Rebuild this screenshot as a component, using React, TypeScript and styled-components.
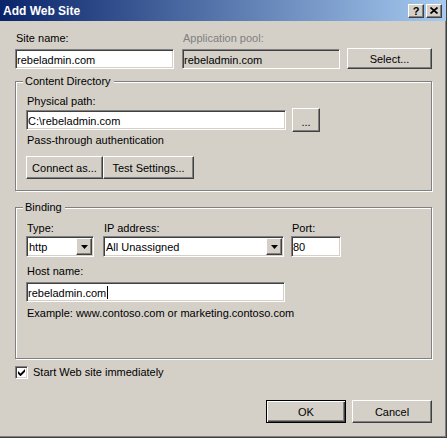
import React from 'react';
import styled, { createGlobalStyle, css } from 'styled-components';

const GlobalStyle = createGlobalStyle`
  html, body { margin: 0; padding: 0; background: #d4d0c8; }
  body {
    font-family: "Liberation Sans", Arial, sans-serif;
    font-size: 11px;
    color: #000;
  }
  * { box-sizing: border-box; }
`;

const raised = css`
  background: #d4d0c8;
  border-top: 1px solid #fff;
  border-left: 1px solid #fff;
  border-right: 1px solid #404040;
  border-bottom: 1px solid #404040;
  box-shadow: inset -1px -1px 0 #808080;
`;

const sunken = css`
  border-top: 1px solid #808080;
  border-left: 1px solid #808080;
  border-right: 1px solid #fff;
  border-bottom: 1px solid #fff;
  box-shadow: inset 1px 1px 0 #404040, inset -1px -1px 0 #d4d0c8;
`;

const Window = styled.div`
  width: 447px;
  height: 438px;
  background: #d4d0c8;
  border-right: 1px solid #404040;
  border-bottom: 1px solid #404040;
  box-shadow: inset -1px -1px 0 #808080;
  display: flex;
  flex-direction: column;
`;

const TitleBar = styled.div`
  height: 21px;
  flex: none;
  display: flex;
  align-items: center;
  padding: 0 4px 0 3px;
  background: linear-gradient(to right, #0a246a, #a6caf0);
  color: #fff;
  font-weight: bold;
  font-size: 12px;
`;

const TitleText = styled.div`
  flex: 1;
  white-space: nowrap;
`;

const CaptionButton = styled.div<{ $gap?: number }>`
  ${raised};
  width: 16px;
  height: 14px;
  margin-left: ${(p) => p.$gap ?? 0}px;
  display: flex;
  align-items: center;
  justify-content: center;
  color: #000;
  font-weight: bold;
  font-size: 11px;
  line-height: 12px;
`;

const Body = styled.div`
  padding: 11px 14px 0 15px;
  display: flex;
  flex-direction: column;
`;

const Row = styled.div<{ $align?: string; $mt?: number; $justify?: string; $gap?: number }>`
  display: flex;
  align-items: ${(p) => p.$align ?? 'flex-start'};
  justify-content: ${(p) => p.$justify ?? 'flex-start'};
  margin-top: ${(p) => p.$mt ?? 0}px;
  gap: ${(p) => p.$gap ?? 0}px;
`;

const Field = styled.div<{ $w: number; $ml?: number }>`
  display: flex;
  flex-direction: column;
  width: ${(p) => p.$w}px;
  margin-left: ${(p) => p.$ml ?? 0}px;
`;

const Label = styled.div<{ $disabled?: boolean; $mt?: number; $mb?: number }>`
  height: 13px;
  line-height: 13px;
  padding-left: 1px;
  white-space: nowrap;
  color: ${(p) => (p.$disabled ? '#808080' : '#000')};
  margin-top: ${(p) => p.$mt ?? 0}px;
  margin-bottom: ${(p) => p.$mb ?? 0}px;
`;

const TextBox = styled.div<{ $w?: number; $h?: number; $disabled?: boolean }>`
  ${sunken};
  width: ${(p) => (p.$w ? `${p.$w}px` : '100%')};
  height: ${(p) => p.$h ?? 20}px;
  background: ${(p) => (p.$disabled ? '#d4d0c8' : '#fff')};
  padding-left: 1px;
  padding-top: 1px;
  display: flex;
  align-items: center;
  white-space: nowrap;
  overflow: hidden;
`;

const Caret = styled.span`
  display: inline-block;
  width: 1px;
  height: 13px;
  background: #000;
  margin-left: 1px;
`;

const Button = styled.div<{ $w: number; $h?: number; $default?: boolean; $ml?: string }>`
  ${raised};
  width: ${(p) => p.$w}px;
  height: ${(p) => p.$h ?? 23}px;
  margin-left: ${(p) => p.$ml ?? '0'};
  display: flex;
  align-items: center;
  justify-content: center;
  white-space: nowrap;
  flex: none;
  ${(p) =>
    p.$default &&
    css`
      border: 1px solid #000;
      box-shadow: inset 1px 1px 0 #fff, inset -1px -1px 0 #404040, inset -2px -2px 0 #808080;
    `}
`;

const EllipsisButton = styled(Button)`
  margin-top: -2px;
  margin-bottom: -2px;
  padding-top: 3px;
`;

const Group = styled.div<{ $mt: number; $pt: number; $pb: number }>`
  position: relative;
  margin-top: ${(p) => p.$mt}px;
  border: 1px solid #808080;
  box-shadow: inset 1px 1px 0 #fff, 1px 1px 0 #fff;
  padding: ${(p) => p.$pt}px 0 ${(p) => p.$pb}px 10px;
  display: flex;
  flex-direction: column;
`;

const GroupTitle = styled.div`
  position: absolute;
  top: -7px;
  left: 7px;
  height: 13px;
  line-height: 13px;
  padding: 0 3px 0 2px;
  background: #d4d0c8;
  white-space: nowrap;
`;

const Combo = styled.div<{ $w: number }>`
  ${sunken};
  width: ${(p) => p.$w}px;
  height: 21px;
  padding: 1px;
  background: #fff;
  display: flex;
  align-items: center;
`;

const ComboText = styled.div`
  flex: 1;
  padding-left: 1px;
  padding-top: 1px;
  white-space: nowrap;
  overflow: hidden;
`;

const DropButton = styled.div`
  ${raised};
  width: 16px;
  height: 17px;
  flex: none;
  display: flex;
  align-items: center;
  justify-content: center;
`;

const CheckRow = styled.div`
  display: flex;
  align-items: center;
  margin-top: 7px;
  height: 13px;
`;

const CheckBox = styled.div`
  ${sunken};
  width: 13px;
  height: 13px;
  background: #fff;
  display: flex;
  align-items: center;
  justify-content: center;
  flex: none;
`;

const CheckLabel = styled.div`
  margin-left: 5px;
  line-height: 13px;
  white-space: nowrap;
`;

const Arrow = () => (
  <svg width="7" height="4" viewBox="0 0 7 4">
    <path d="M0 0 H7 L3.5 4 Z" fill="#000" />
  </svg>
);

const CloseGlyph = () => (
  <svg width="8" height="7" viewBox="0 0 8 7">
    <path d="M0.5 0.5 L7.5 6.5 M7.5 0.5 L0.5 6.5" stroke="#000" strokeWidth="1.7" />
  </svg>
);

const CheckGlyph = () => (
  <svg width="7" height="7" viewBox="0 0 7 7">
    <path d="M0 2 L2.5 4.5 L7 0 V2.8 L2.5 7.3 L0 4.8 Z" fill="#000" />
  </svg>
);

export default function App() {
  return (
    <>
      <GlobalStyle />
      <Window>
        <TitleBar>
          <TitleText>Add Web Site</TitleText>
          <CaptionButton>?</CaptionButton>
          <CaptionButton $gap={2}>
            <CloseGlyph />
          </CaptionButton>
        </TitleBar>
        <Body>
          <Row $align="flex-end">
            <Field $w={159}>
              <Label $mb={4}>Site name:</Label>
              <TextBox>rebeladmin.com</TextBox>
            </Field>
            <Field $w={158} $ml={8}>
              <Label $mb={4} $disabled>
                Application pool:
              </Label>
              <TextBox $disabled>rebeladmin.com</TextBox>
            </Field>
            <Button $w={85} $h={21} $ml="auto">
              Select...
            </Button>
          </Row>

          <Group $mt={12} $pt={13} $pb={11}>
            <GroupTitle>Content Directory</GroupTitle>
            <Label>Physical path:</Label>
            <Row $align="center" $mt={2}>
              <TextBox $w={260}>C:\rebeladmin.com</TextBox>
              <EllipsisButton $w={28} $h={24} $ml="6px">
                ...
              </EllipsisButton>
            </Row>
            <Label $mt={4}>Pass-through authentication</Label>
            <Row $mt={9}>
              <Button $w={77}>Connect as...</Button>
              <Button $w={91}>Test Settings...</Button>
            </Row>
          </Group>

          <Group $mt={16} $pt={14} $pb={38}>
            <GroupTitle>Binding</GroupTitle>
            <Row>
              <Field $w={68}>
                <Label $mb={1}>Type:</Label>
                <Combo $w={68}>
                  <ComboText>http</ComboText>
                  <DropButton>
                    <Arrow />
                  </DropButton>
                </Combo>
              </Field>
              <Field $w={181} $ml={9}>
                <Label $mb={1}>IP address:</Label>
                <Combo $w={181}>
                  <ComboText>All Unassigned</ComboText>
                  <DropButton>
                    <Arrow />
                  </DropButton>
                </Combo>
              </Field>
              <Field $w={50} $ml={7}>
                <Label $mb={1}>Port:</Label>
                <TextBox $h={21}>80</TextBox>
              </Field>
            </Row>
            <Label $mt={8} $mb={4}>
              Host name:
            </Label>
            <TextBox $w={259}>
              rebeladmin.com
              <Caret />
            </TextBox>
            <Label $mt={5}>Example: www.contoso.com or marketing.contoso.com</Label>
          </Group>

          <CheckRow>
            <CheckBox>
              <CheckGlyph />
            </CheckBox>
            <CheckLabel>Start Web site immediately</CheckLabel>
          </CheckRow>

          <Row $justify="flex-end" $gap={6} $mt={21}>
            <Button $w={80} $default>
              OK
            </Button>
            <Button $w={80}>Cancel</Button>
          </Row>
        </Body>
      </Window>
    </>
  );
}
